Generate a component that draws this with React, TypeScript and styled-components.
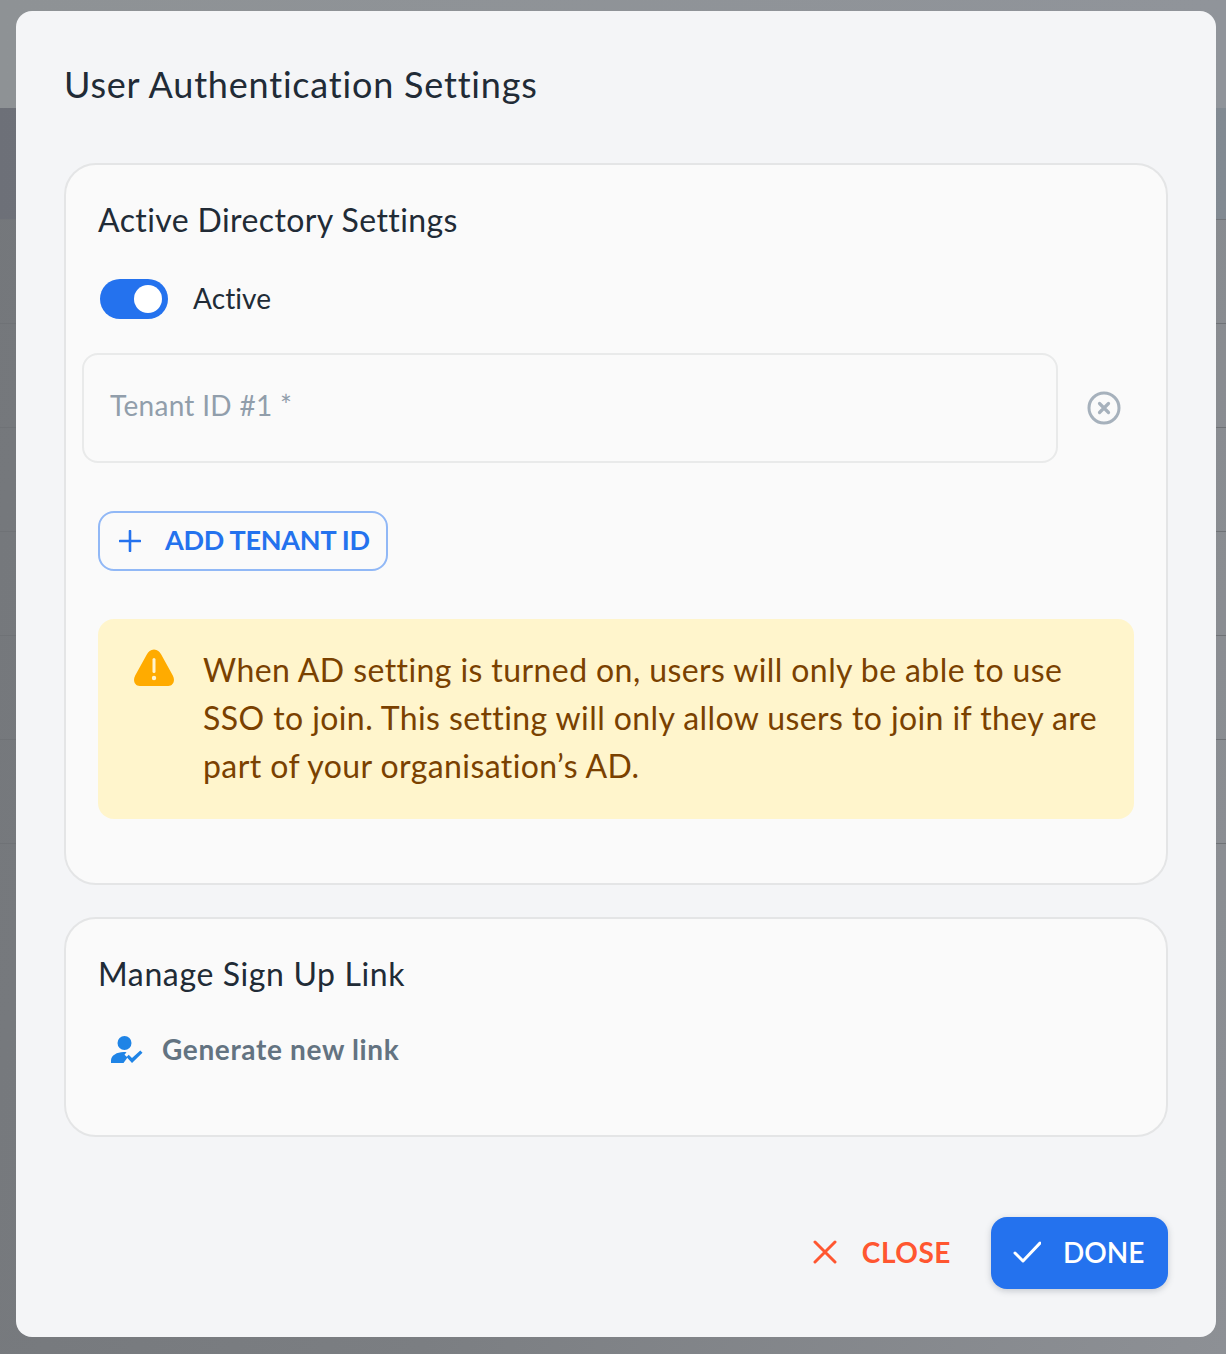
import React from 'react';
import styled, { createGlobalStyle } from 'styled-components';

const GlobalStyle = createGlobalStyle`
  html, body {
    margin: 0;
    padding: 0;
    background: #7b7e82;
    font-family: Lato, "Noto Sans", sans-serif;
  }
`;

const Page = styled.div`
  position: relative;
  width: 1226px;
  height: 1354px;
  overflow: hidden;
`;

const Backdrop = styled.div`
  display: flex;
  flex-direction: column;
  height: 100%;
  background: linear-gradient(100deg, #74777b 0%, #7b7e82 45%, #8d9095 100%);
`;

const BackdropHeader = styled.div`
  height: 108px;
  background: linear-gradient(90deg, #8e9295 0%, #90949a 100%);
`;

const BackdropBand = styled.div`
  height: 111px;
  border-bottom: 1px solid #72757a;
  background: linear-gradient(90deg, #6d7078 0%, #828a92 100%);
`;

const BackdropRow = styled.div`
  height: 103px;
  border-bottom: 1px solid #6f7276;

  &:first-of-type {
    margin-top: 2px;
  }
`;

const Dialog = styled.div`
  position: absolute;
  top: 11px;
  left: 16px;
  box-sizing: border-box;
  display: flex;
  flex-direction: column;
  width: 1200px;
  height: 1326px;
  padding: 48px;
  border-radius: 16px;
  background: #f4f5f7;
  color: #212b36;
`;

const DialogTitle = styled.h2`
  margin: 0 0 56px;
  height: 48px;
  font-size: 36px;
  line-height: 50px;
  font-weight: 400;
  letter-spacing: 0.8px;
`;

const Card = styled.section<{ $height: number }>`
  box-sizing: border-box;
  display: flex;
  flex-direction: column;
  align-items: flex-start;
  height: ${props => props.$height}px;
  margin-bottom: 32px;
  padding: 32px;
  border: 2px solid #e4e5e6;
  border-radius: 32px;
  background: #fafafa;
`;

const CardTitle = styled.h3<{ $spacing: number }>`
  margin: 0 0 34px;
  height: 48px;
  font-size: 32px;
  line-height: 46px;
  font-weight: 400;
  letter-spacing: ${props => props.$spacing}px;
`;

const ToggleRow = styled.div`
  display: flex;
  align-items: center;
  gap: 25px;
  height: 40px;
  margin: 0 0 34px 2px;
`;

const Toggle = styled.span`
  display: flex;
  align-items: center;
  justify-content: flex-end;
  box-sizing: border-box;
  width: 68px;
  height: 40px;
  padding-right: 6px;
  border-radius: 20px;
  background: #2472ee;
`;

const ToggleKnob = styled.span`
  width: 28px;
  height: 28px;
  border-radius: 50%;
  background: #fff;
`;

const ToggleLabel = styled.span`
  padding-bottom: 2px;
  font-size: 28px;
  letter-spacing: 0.1px;
`;

const TenantRow = styled.div`
  display: flex;
  align-items: center;
  gap: 28px;
  margin: 0 0 48px -16px;
`;

const TenantInput = styled.div`
  box-sizing: border-box;
  width: 976px;
  height: 110px;
  padding: 31px 26px 0;
  border: 2px solid #e9eaea;
  border-radius: 16px;
  color: #919eab;
  font-size: 28px;
  line-height: 38px;
  letter-spacing: 0.3px;
`;

const RemoveButton = styled.span`
  display: flex;
  width: 36px;
  height: 36px;
  color: #a6b1bc;
`;

const AddButton = styled.button`
  display: flex;
  align-items: center;
  gap: 24px;
  box-sizing: border-box;
  width: 290px;
  height: 60px;
  margin: 0 0 48px;
  padding: 0 0 3px 19px;
  border: 2px solid #91b8f6;
  border-radius: 16px;
  background: transparent;
  color: #2472ee;
  font-family: inherit;
  font-size: 27px;
  font-weight: 700;
  letter-spacing: -0.25px;
  white-space: nowrap;

  svg {
    flex: none;
    margin-top: 3px;
  }
`;

const Alert = styled.div`
  display: flex;
  gap: 28px;
  box-sizing: border-box;
  width: 1036px;
  height: 200px;
  padding: 27px 32px 0 35px;
  border-radius: 16px;
  background: #fff5cc;
  color: #7a4100;
`;

const AlertIcon = styled.span`
  flex: none;
  width: 42px;
  height: 38px;
  margin-top: 3px;
`;

const AlertText = styled.p`
  margin: 0;
  font-size: 32px;
  line-height: 48px;
  letter-spacing: 0.41px;
`;

const LinkRow = styled.div`
  display: flex;
  align-items: center;
  gap: 18px;
  height: 40px;
  margin: -4px 0 0 10px;
  color: #637381;
  font-size: 28px;
  font-weight: 700;
  letter-spacing: 0.65px;
`;

const Footer = styled.footer`
  display: flex;
  justify-content: flex-end;
  align-items: center;
  gap: 40px;
  margin-top: 48px;
`;

const CloseButton = styled.button`
  display: flex;
  align-items: center;
  gap: 25px;
  height: 70px;
  padding: 0 0 2px;
  border: 0;
  background: none;
  color: #ff5630;
  font-family: inherit;
  font-size: 28px;
  font-weight: 700;
  letter-spacing: 0.55px;
`;

const DoneButton = styled.button`
  display: flex;
  align-items: center;
  gap: 22px;
  box-sizing: border-box;
  width: 177px;
  height: 72px;
  padding: 0 0 2px 22px;
  border: 0;
  border-radius: 16px;
  background: #2472ee;
  box-shadow: 0 2px 6px rgba(60, 70, 90, 0.25);
  color: #fff;
  font-family: inherit;
  font-size: 28px;
  font-weight: 600;
`;

const PlusIcon = () => (
  <svg width="22" height="22" viewBox="0 0 22 22" fill="none" stroke="currentColor" strokeWidth="2.6" strokeLinecap="round">
    <path d="M11 1v20M1 11h20" />
  </svg>
);

const CircleCloseIcon = () => (
  <svg width="36" height="36" viewBox="0 0 36 36" fill="none" stroke="currentColor">
    <circle cx="18" cy="18" r="15" strokeWidth="3" />
    <path d="M13.5 13.5l9 9M22.5 13.5l-9 9" strokeWidth="3.2" strokeLinecap="round" />
  </svg>
);

const WarningIcon = () => (
  <svg width="42" height="38" viewBox="0 0 42 38">
    <path
      fill="#ffab00"
      d="M21 0.500c3.600 0 5.500 2.200 7.200 5l11.600 21c2.700 4.800 0.500 10.500-4.500 10.500H6.700c-5 0-7.200-5.700-4.500-10.500l11.600-21c1.700-2.800 3.600-5 7.200-5z"
    />
    <rect x="19.500" y="9" width="3" height="15" rx="1.500" fill="#fff4cd" />
    <circle cx="21" cy="29" r="2.200" fill="#fff4cd" />
  </svg>
);

const UserCheckIcon = () => (
  <svg width="36" height="32" viewBox="0 0 36 32" fill="#1f84e6">
    <circle cx="16.500" cy="10" r="7" />
    <path d="M3 30v-2.500c0-5 6-8.500 12.500-8.500 1 0 2 .1 3 .2l-2 2.600 3 2.700L15.500 30z" />
    <path d="M18.500 24l2.200-2.200 3.300 3.300 8.300-7.600 2.200 2.200L24 30z" />
  </svg>
);

const CrossIcon = () => (
  <svg width="24" height="24" viewBox="0 0 24 24" fill="none" stroke="currentColor" strokeWidth="3" strokeLinecap="round">
    <path d="M2 2l20 20M22 2L2 22" />
  </svg>
);

const CheckIcon = () => (
  <svg width="28" height="22" viewBox="0 0 28 22" fill="none" stroke="currentColor" strokeWidth="3" strokeLinecap="round" strokeLinejoin="round">
    <path d="M2 12l8 8L27 2" />
  </svg>
);

export default function App() {
  return (
    <Page>
      <GlobalStyle />
      <Backdrop>
        <BackdropHeader />
        <BackdropBand />
        {[0, 1, 2, 3, 4, 5].map(row => (
          <BackdropRow key={row} />
        ))}
      </Backdrop>
      <Dialog>
        <DialogTitle>User Authentication Settings</DialogTitle>
        <Card $height={722}>
          <CardTitle $spacing={0.4}>Active Directory Settings</CardTitle>
          <ToggleRow>
            <Toggle>
              <ToggleKnob />
            </Toggle>
            <ToggleLabel>Active</ToggleLabel>
          </ToggleRow>
          <TenantRow>
            <TenantInput>Tenant ID #1 *</TenantInput>
            <RemoveButton>
              <CircleCloseIcon />
            </RemoveButton>
          </TenantRow>
          <AddButton>
            <PlusIcon />
            ADD TENANT ID
          </AddButton>
          <Alert>
            <AlertIcon>
              <WarningIcon />
            </AlertIcon>
            <AlertText>
              When AD setting is turned on, users will only be able to use SSO to join. This setting will only allow
              users to join if they are part of your organisation’s AD.
            </AlertText>
          </Alert>
        </Card>
        <Card $height={220}>
          <CardTitle $spacing={0.62}>Manage Sign Up Link</CardTitle>
          <LinkRow>
            <UserCheckIcon />
            Generate new link
          </LinkRow>
        </Card>
        <Footer>
          <CloseButton>
            <CrossIcon />
            CLOSE
          </CloseButton>
          <DoneButton>
            <CheckIcon />
            DONE
          </DoneButton>
        </Footer>
      </Dialog>
    </Page>
  );
}
